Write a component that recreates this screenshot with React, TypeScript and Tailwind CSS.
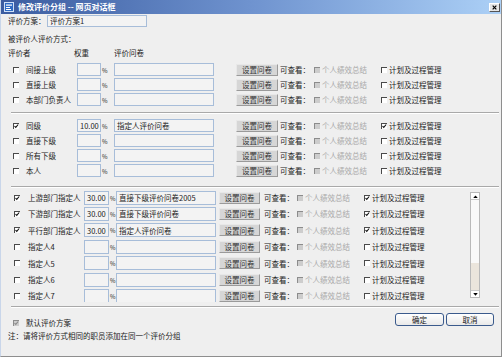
import React from "react";

function Cb({ checked = false, disabled = false }: { checked?: boolean; disabled?: boolean }) {
  return (
    <span
      className={
        disabled
          ? "relative block w-[6px] h-[6px] shrink-0 border-t border-l border-t-[#8c8c8c] border-l-[#8c8c8c] bg-[#cdcdcd]"
          : "relative block w-[6px] h-[6px] shrink-0 border-t border-l border-t-[#4a4a4a] border-l-[#4a4a4a] bg-white"
      }
    >
      {checked && (
        <svg viewBox="0 0 6 6" className="absolute left-0 top-0 w-[5px] h-[5px]">
          <path d="M0.6 2.4 L2.1 4 L5 0.6" fill="none" stroke={disabled ? "#8a8a8a" : "#111"} strokeWidth="1.3" />
        </svg>
      )}
    </span>
  );
}

function Inp({ className, value }: { className: string; value?: string }) {
  return (
    <div
      className={`shrink-0 border border-[#a7bdd9] bg-[#f3f3f3] px-[2px] flex items-center whitespace-nowrap overflow-hidden text-[#222] ${className}`}
    >
      {value}
    </div>
  );
}

function Btn({ className, label = "设置问卷" }: { className: string; label?: string }) {
  return (
    <div
      className={`shrink-0 h-[12px] flex items-center justify-center bg-[#d6d6d6] border border-t-[#e8e8e8] border-l-[#e8e8e8] border-b-[#9a9a9a] border-r-[#9a9a9a] text-[#333] whitespace-nowrap ${className}`}
    >
      {label}
    </div>
  );
}

type RowData = { label: string; checked?: boolean; weight?: string; q?: string; plan?: boolean };

function RowA({ label, checked, weight, q, plan }: RowData) {
  return (
    <div className="flex items-center h-[15px]">
      <div className="ml-[12px]">
        <Cb checked={checked} />
      </div>
      <span className="ml-[7px] w-[51px] whitespace-nowrap">{label}</span>
      <Inp className="w-[24px] h-[13px]" value={weight} />
      <span className="w-[13px] pl-[1px] text-[6px] pt-[2px]">%</span>
      <Inp className="w-[100px] h-[13px]" value={q} />
      <Btn className="ml-[22px] w-[42px]" />
      <span className="ml-[2px] w-[34px] whitespace-nowrap">可查看：</span>
      <Cb disabled />
      <span className="ml-[2px] w-[59px] whitespace-nowrap text-[#a8a8a8]">个人绩效总结</span>
      <Cb checked={plan} />
      <span className="ml-[2px] whitespace-nowrap">计划及过程管理</span>
    </div>
  );
}

function RowB({ label, checked, weight, q, plan }: RowData) {
  return (
    <div className="flex items-center h-[16.4px] shrink-0">
      <div className="ml-[13px]">
        <Cb checked={checked} />
      </div>
      <span className="ml-[8px] w-[56px] whitespace-nowrap">{label}</span>
      <Inp className="w-[25px] h-[14px]" value={weight} />
      <span className="w-[7px] pl-[1px] text-[6px] pt-[2px]">%</span>
      <Inp className="w-[100px] h-[14px]" value={q} />
      <Btn className="ml-[3px] w-[41px]" />
      <span className="ml-[4px] w-[33px] whitespace-nowrap">可查看：</span>
      <Cb disabled />
      <span className="ml-[2px] w-[59px] whitespace-nowrap text-[#a8a8a8]">个人绩效总结</span>
      <Cb checked={plan} />
      <span className="ml-[2px] whitespace-nowrap">计划及过程管理</span>
    </div>
  );
}

function PartialRow() {
  return (
    <div className="flex items-start h-[16.4px] shrink-0 pt-[1px]">
      <div className="ml-[83px] w-[25px] h-[14px] border border-[#a7bdd9] bg-[#f3f3f3]" />
      <div className="ml-[7px] w-[100px] h-[14px] border border-[#a7bdd9] bg-[#f3f3f3]" />
      <div className="ml-[3px] w-[41px] h-[12px] bg-[#d6d6d6] border border-t-[#e8e8e8] border-l-[#e8e8e8] border-b-[#9a9a9a] border-r-[#9a9a9a]" />
    </div>
  );
}

function Sep() {
  return <div className="ml-[10px] w-[488px] h-[2px] border-t border-t-[#a9a9a9] border-b border-b-white" />;
}

const g1: RowData[] = [{ label: "间接上级" }, { label: "直接上级" }, { label: "本部门负责人" }];
const g2: RowData[] = [
  { label: "同级", checked: true, weight: "10.00", q: "指定人评价问卷", plan: true },
  { label: "直接下级" },
  { label: "所有下级" },
  { label: "本人" },
];
const g3: RowData[] = [
  { label: "上游部门指定人", checked: true, weight: "30.00", q: "直接下级评价问卷2005", plan: true },
  { label: "下游部门指定人", checked: true, weight: "30.00", q: "直接下级评价问卷", plan: true },
  { label: "平行部门指定人", checked: true, weight: "30.00", q: "指定人评价问卷", plan: true },
  { label: "指定人4" },
  { label: "指定人5" },
  { label: "指定人6" },
  { label: "指定人7" },
];

export default function App() {
  return (
    <div className="w-[504px] h-[357px] bg-white overflow-hidden font-['Noto_Sans_CJK_SC','Noto_Sans_CJK_JP',sans-serif] text-[7.5px] leading-none text-[#222]">
      <div className="w-[502px] h-[357px] bg-[#efefef] border-r border-b border-[#8e8e8e] border-l border-l-[#c9d6ea] flex flex-col">
        {/* title bar */}
        <div className="h-[14px] shrink-0 flex items-center bg-linear-to-r from-[#3b5ca0] via-[#6f93cf] to-[#acd0f6]">
          <svg viewBox="0 0 10 10" className="ml-[3px] w-[10px] h-[10px]">
            <rect x="0.5" y="0.5" width="9" height="9" fill="#2f6cc4" stroke="#cfe0f8" />
            <rect x="2" y="2.5" width="6" height="1.2" fill="#fff" />
            <rect x="2" y="5" width="4" height="1" fill="#fff" />
            <rect x="2" y="7" width="5" height="1" fill="#fff" />
          </svg>
          <span className="ml-[4px] text-white font-bold text-[8px] whitespace-nowrap">修改评价分组 -- 网页对话框</span>
          <div className="ml-auto mr-[1px] w-[11px] h-[9px] bg-[#e6e6e6] border border-t-white border-l-white border-b-[#555] border-r-[#555] flex items-center justify-center">
            <svg viewBox="0 0 6 6" className="w-[5px] h-[5px]">
              <path d="M0.8 0.8 L5.2 5.2 M5.2 0.8 L0.8 5.2" stroke="#000" strokeWidth="1.4" />
            </svg>
          </div>
        </div>

        {/* scheme name */}
        <div className="mt-[1px] h-[12px] flex items-center">
          <span className="ml-[7px] w-[39px] whitespace-nowrap">评价方案：</span>
          <Inp className="w-[100px] h-[12px]" value="评价方案1" />
        </div>
        <div className="mt-[6px] h-[12px] flex items-center">
          <span className="ml-[7px] whitespace-nowrap">被评价人评价方式：</span>
        </div>
        <div className="mt-[3px] h-[10px] flex items-center">
          <span className="ml-[7px] w-[66px]">评价者</span>
          <span className="w-[40px]">权重</span>
          <span>评价问卷</span>
        </div>

        {/* group 1 */}
        <div className="mt-[4px] flex flex-col">
          {g1.map((r) => (
            <RowA key={r.label} {...r} />
          ))}
        </div>
        <div className="mt-[5px]">
          <Sep />
        </div>

        {/* group 2 */}
        <div className="mt-[4px] flex flex-col">
          {g2.map((r) => (
            <RowA key={r.label} {...r} />
          ))}
        </div>
        <div className="mt-[8px]">
          <Sep />
        </div>

        {/* group 3 with scroll */}
        <div className="mt-[1px] h-[113px] flex">
          <div className="w-[469px] h-[113px] overflow-hidden flex flex-col pt-[0.5px]">
            {g3.map((r) => (
              <RowB key={r.label} {...r} />
            ))}
            <PartialRow />
          </div>
          <div className="mt-[3px] w-[10px] h-[106px] border border-[#b9b9b9] bg-[#f9f9f9] flex flex-col">
            <div className="h-[7px] border-b border-[#c8c8c8] bg-white flex items-center justify-center">
              <svg viewBox="0 0 6 4" className="w-[5px] h-[3px]">
                <path d="M0 4 L3 0.5 L6 4 Z" fill="#000" />
              </svg>
            </div>
            <div className="flex-1" />
            <div className="h-[27px] bg-[#ebe5dc]" />
            <div className="h-[7px] border-t border-[#c8c8c8] bg-white flex items-center justify-center">
              <svg viewBox="0 0 6 4" className="w-[5px] h-[3px]">
                <path d="M0 0 L3 3.5 L6 0 Z" fill="#000" />
              </svg>
            </div>
          </div>
        </div>
        <div className="mt-[4px]">
          <Sep />
        </div>

        {/* bottom */}
        <div className="flex">
          <div className="flex flex-col">
            <div className="mt-[9px] h-[12px] flex items-center">
              <div className="ml-[12px]">
                <Cb checked disabled />
              </div>
              <span className="ml-[7px] whitespace-nowrap">默认评价方案</span>
            </div>
            <div className="mt-[1px] h-[12px] flex items-center">
              <span className="ml-[7px] whitespace-nowrap">注：请将评价方式相同的职员添加在同一个评价分组</span>
            </div>
          </div>
          <div className="ml-auto mr-[7px] mt-[5px] flex gap-[2px]">
            <div className="w-[49px] h-[13px] rounded-[3px] border border-[#3a5a8c] bg-linear-to-b from-white to-[#e9e9e9] flex items-center justify-center">
              确定
            </div>
            <div className="w-[48px] h-[13px] rounded-[3px] border border-[#3a5a8c] bg-linear-to-b from-white to-[#e9e9e9] flex items-center justify-center">
              取消
            </div>
          </div>
        </div>
      </div>
    </div>
  );
}
